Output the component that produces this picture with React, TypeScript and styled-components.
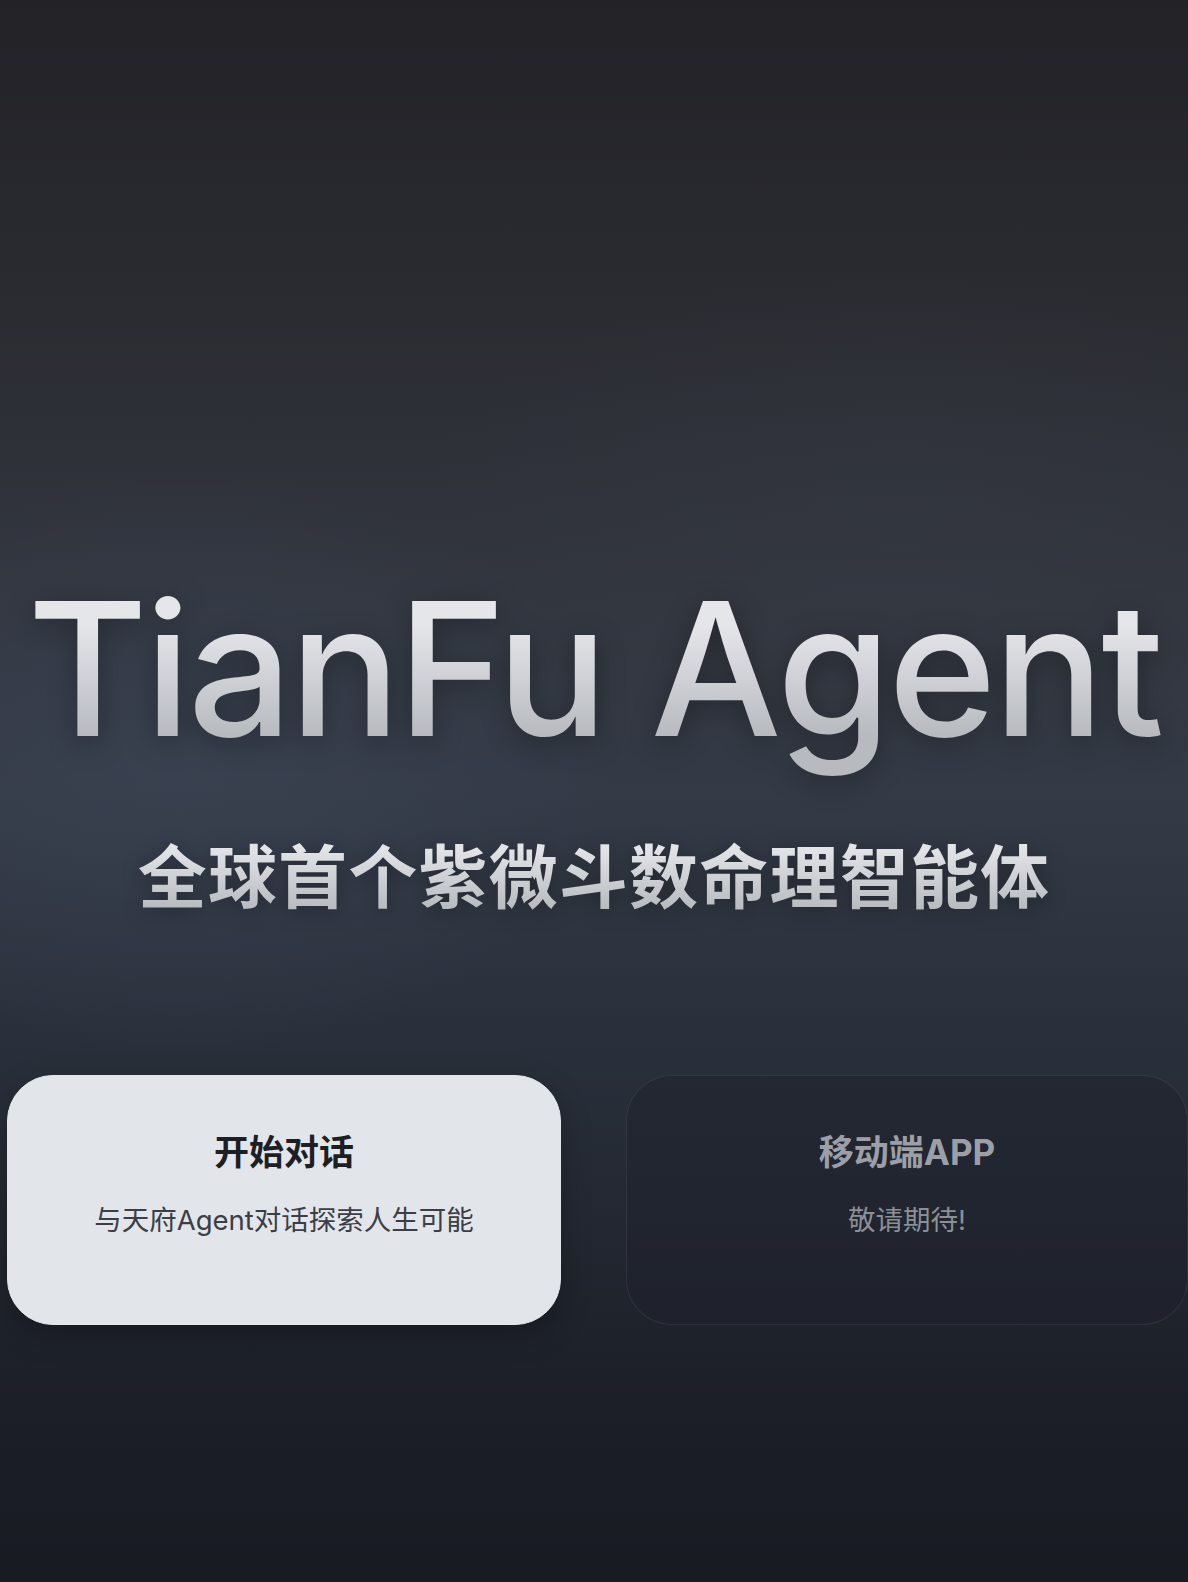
import styled, { createGlobalStyle } from "styled-components";

const GlobalStyle = createGlobalStyle`
  html, body {
    margin: 0;
    padding: 0;
    background: #1b1e25;
    overflow: hidden;
  }
  * {
    box-sizing: border-box;
  }
`;

const Page = styled.main`
  height: 1582px;
  width: 100%;
  display: flex;
  flex-direction: column;
  align-items: center;
  padding-top: 558px;
  font-family: Inter, "Noto Sans CJK SC", sans-serif;
  background:
    radial-gradient(ellipse 620px 420px at 180px 760px, rgba(62, 72, 90, 0.5), rgba(62, 72, 90, 0) 70%),
    radial-gradient(ellipse 700px 360px at 900px 520px, rgba(56, 60, 70, 0.35), rgba(56, 60, 70, 0) 70%),
    linear-gradient(
      180deg,
      #222227 0%,
      #2a2b31 18%,
      #32363f 38%,
      #343a46 50%,
      #2b313c 64%,
      #222731 78%,
      #1b1e26 90%,
      #181b22 100%
    );
  overflow: hidden;
`;

const Title = styled.h1`
  margin: 0;
  font-family: Inter, "Liberation Sans", sans-serif;
  font-size: 185px;
  font-weight: 500;
  line-height: 1.2;
  letter-spacing: -3.4px;
  white-space: nowrap;
  background: linear-gradient(180deg, #e4e6ea 30%, #b7babf 80%);
  -webkit-background-clip: text;
  background-clip: text;
  color: transparent;
  filter: drop-shadow(0 6px 14px rgba(0, 0, 0, 0.3));
`;

const Subtitle = styled.h2`
  margin: 52px 0 0;
  font-family: "Noto Sans CJK SC", sans-serif;
  font-size: 69px;
  font-weight: 700;
  line-height: 1.2;
  letter-spacing: 1.2px;
  white-space: nowrap;
  background: linear-gradient(180deg, #e2e4e8 20%, #b9bcc1 90%);
  -webkit-background-clip: text;
  background-clip: text;
  color: transparent;
  filter: drop-shadow(0 4px 10px rgba(0, 0, 0, 0.3));
`;

const CardRow = styled.div`
  margin-top: 160px;
  width: 100%;
  display: grid;
  grid-template-columns: 554px 562px;
  gap: 65px;
  padding-left: 7px;
`;

const Card = styled.div<{ $active?: boolean }>`
  height: 250px;
  border-radius: 46px;
  display: flex;
  flex-direction: column;
  align-items: center;
  padding-top: 54px;
  background: ${(p) => (p.$active ? "#e2e5ea" : "rgba(30, 34, 44, 0.45)")};
  border: 1px solid ${(p) => (p.$active ? "#e2e5ea" : "rgba(255, 255, 255, 0.07)")};
  box-shadow: ${(p) => (p.$active ? "0 10px 30px rgba(0, 0, 0, 0.25)" : "none")};
`;

const CardTitle = styled.div<{ $active?: boolean }>`
  font-family: Inter, "Noto Sans CJK SC", sans-serif;
  font-size: 35px;
  font-weight: 700;
  line-height: 44px;
  color: ${(p) => (p.$active ? "#1d1f25" : "#9c9fa6")};
`;

const CardText = styled.div<{ $active?: boolean }>`
  margin-top: 28px;
  font-family: Inter, "Noto Sans CJK SC", sans-serif;
  font-size: 27.5px;
  font-weight: 400;
  line-height: 36px;
  color: ${(p) => (p.$active ? "#3b3e45" : "#8c8f96")};
`;

export default function App() {
  return (
    <>
      <GlobalStyle />
      <Page>
        <Title>TianFu Agent</Title>
        <Subtitle>全球首个紫微斗数命理智能体</Subtitle>
        <CardRow>
          <Card $active>
            <CardTitle $active>开始对话</CardTitle>
            <CardText $active>与天府Agent对话探索人生可能</CardText>
          </Card>
          <Card>
            <CardTitle>移动端APP</CardTitle>
            <CardText>敬请期待!</CardText>
          </Card>
        </CardRow>
      </Page>
    </>
  );
}
